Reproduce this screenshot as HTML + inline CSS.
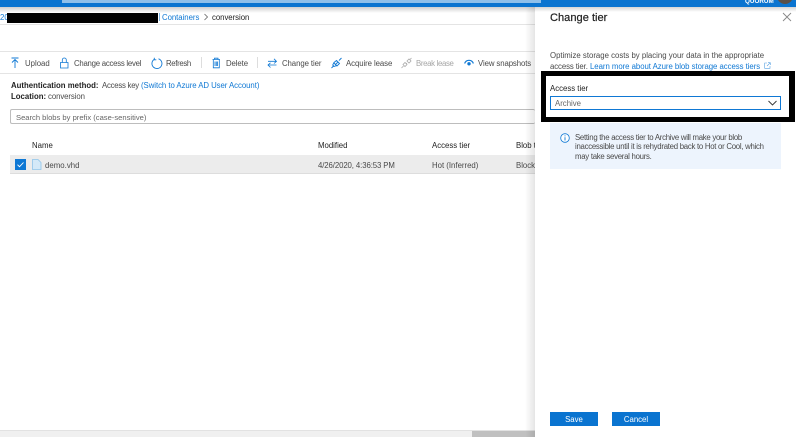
<!DOCTYPE html>
<html><head><meta charset="utf-8"><style>
html,body{margin:0;padding:0;background:#fff}
body{width:796px;height:437px;overflow:hidden;position:relative;font-family:"Liberation Sans",sans-serif;font-size:7.8px;color:#4a4a4a}
.a{position:absolute;white-space:nowrap;line-height:12px;margin-top:1px}
.r{position:absolute}
.l{color:#0f78d4}
svg{position:absolute;overflow:visible}
</style></head><body>
<div class="r" style="left:0;top:7px;width:796px;height:6px;background:linear-gradient(#cfcfcf,#fff)"></div>
<div class="r" style="left:0;top:0;width:796px;height:7px;background:#0a74d0"></div>
<div class="r" style="left:62px;top:0;width:479px;height:3px;background:#8fc0ea"></div>
<div class="a" style="left:745px;top:-5px;color:#fff;font-size:6.300px;font-weight:bold">QUORUM</div>
<div class="r" style="left:777px;top:-12px;width:16px;height:16px;border-radius:50%;background:#5a5048"></div>

<div class="a l" style="left:0;top:11px">20</div>
<div class="r" style="left:7px;top:13px;width:151px;height:10px;background:#000"></div>
<div class="r" style="left:159px;top:13px;width:1px;height:8px;background:#7fb5e5"></div>
<div class="a l" style="left:162px;top:11px;letter-spacing:-.04px">Containers</div>
<svg style="left:203px;top:13px" width="6" height="8"><path d="M1.500 1l3 3-3 3" fill="none" stroke="#666" stroke-width=".8"/></svg>
<div class="a" style="left:212px;top:11px;color:#222;letter-spacing:-.04px">conversion</div>
<div class="r" style="left:0;top:24px;width:535px;height:1px;background:#e4e4e4"></div>
<div class="r" style="left:0;top:51px;width:535px;height:1px;background:#e4e4e4"></div>
<div class="r" style="left:0;top:73px;width:535px;height:1px;background:#e4e4e4"></div>

<svg style="left:10px;top:57px" width="12" height="12"><path d="M5 11V2.500M2 5.500l3-3 3 3M1.500 1h7" fill="none" stroke="#0f78d4" stroke-width=".9"/></svg>
<div class="a" style="left:25px;top:57px">Upload</div>
<svg style="left:60px;top:57px" width="10" height="12"><path d="M.5 5.500h7.500v5.500h-7.500zM2.300 5.500V3a2 2 0 0 1 4 0v2.500" fill="none" stroke="#0f78d4" stroke-width=".8"/></svg>
<div class="a" style="left:74px;top:57px;letter-spacing:-.25px">Change access level</div>
<svg style="left:151px;top:57px" width="12" height="12"><path d="M3 2.500a5 5 0 1 0 4.500-.7M3.300 .8v2h2" fill="none" stroke="#0f78d4" stroke-width=".9"/></svg>
<div class="a" style="left:166px;top:57px;letter-spacing:-.35px">Refresh</div>
<div class="r" style="left:201px;top:57px;width:1px;height:11px;background:#ddd"></div>
<svg style="left:212px;top:57px" width="10" height="12"><path d="M.5 2.500h7.500M2.500 2.500V1.200h3.500v1.300M1.300 2.500v8.300h6V2.500M3 4.500v4.500M4.300 4.500v4.500M5.600 4.500v4.500" fill="none" stroke="#0f78d4" stroke-width=".8"/></svg>
<div class="a" style="left:226px;top:57px;letter-spacing:-.1px">Delete</div>
<div class="r" style="left:257px;top:57px;width:1px;height:11px;background:#ddd"></div>
<svg style="left:267px;top:57px" width="11" height="12"><path d="M1 4.300h8.500M7 1.800l2.500 2.500L7 6.500M9.500 8H1M3.500 5.800L1 8l2.500 2.500" fill="none" stroke="#0f78d4" stroke-width=".8"/></svg>
<div class="a" style="left:282px;top:57px;letter-spacing:-.08px">Change tier</div>
<svg style="left:331px;top:57px" width="11" height="12"><path d="M.5 11l2.500-2.500M8 3.500L10.500 1M3 5.500l2.500-2 3 3-2.500 2.500-3-3zM3 5.500L1.700 8l1.300 1.500 3-1M7 5l-3 3" fill="none" stroke="#0f78d4" stroke-width=".9"/></svg>
<div class="a" style="left:346px;top:57px;letter-spacing:-.08px">Acquire lease</div>
<svg style="left:401px;top:57px" width="11" height="12"><path d="M.5 11l2-2M8.500 3L10.500 1M2 7.500l2-2 2 2-2 2zM6 4l2-2 2 2-2 2zM5 7l1-1" fill="none" stroke="#aaa" stroke-width=".8"/></svg>
<div class="a" style="left:416px;top:57px;color:#a6a6a6;letter-spacing:-.33px">Break lease</div>
<svg style="left:464px;top:59px" width="10" height="8"><path d="M.7 4.500a4.500 4.500 0 0 1 8.600 0" fill="none" stroke="#0f78d4" stroke-width="1.200"/><circle cx="5" cy="4.800" r="1.700" fill="#0f78d4"/></svg>
<div class="a" style="left:478px;top:57px;letter-spacing:-.1px">View snapshots</div>

<div class="a" style="left:11px;top:79px;color:#222;font-weight:bold">Authentication method:</div>
<div class="a" style="left:102px;top:79px;letter-spacing:-.25px">Access key</div>
<div class="a l" style="left:141px;top:79px;letter-spacing:-.05px">(Switch to Azure AD User Account)</div>
<div class="a" style="left:11px;top:90px;color:#222;font-weight:bold">Location:</div>
<div class="a" style="left:48px;top:90px;letter-spacing:-.08px">conversion</div>
<div class="r" style="left:10px;top:109px;width:524px;height:13px;border:1px solid #bdbdbd;border-radius:2px;border-right:0"></div>
<div class="a" style="left:16px;top:111px;color:#666;font-size:7.600px">Search blobs by prefix (case-sensitive)</div>

<div class="a" style="left:32px;top:139px;color:#222">Name</div>
<div class="a" style="left:318px;top:139px;color:#222">Modified</div>
<div class="a" style="left:432px;top:139px;color:#222">Access tier</div>
<div class="a" style="left:516px;top:139px;color:#222">Blob t</div>
<div class="r" style="left:10px;top:155px;width:525px;height:18px;background:#ececec;border-bottom:1px solid #ddd"></div>
<div class="r" style="left:15px;top:159px;width:11px;height:11px;background:#0f78d4"></div>
<svg style="left:15px;top:159px" width="11" height="11"><path d="M2.500 5.700l2 2 4-4.200" fill="none" stroke="#fff" stroke-width=".9"/></svg>
<svg style="left:32px;top:159px" width="10" height="11"><path d="M.5.500h5.500l3 3v7h-8.500z" fill="#d4e9f8" stroke="#8fc5ea" stroke-width=".8"/></svg>
<div class="a" style="left:45px;top:159px;letter-spacing:.03px">demo.vhd</div>
<div class="a" style="left:318px;top:159px;letter-spacing:-.1px">4/26/2020, 4:36:53 PM</div>
<div class="a" style="left:432px;top:159px">Hot (Inferred)</div>
<div class="a" style="left:516px;top:159px">Block</div>

<div class="r" style="left:0;top:430px;width:535px;height:7px;background:#f0f0f0;border-top:1px solid #e2e2e2;box-sizing:border-box"></div>
<div class="r" style="left:472px;top:431px;width:63px;height:6px;background:#c0c0c0"></div>

<div class="r" style="left:525px;top:7px;width:10px;height:430px;background:linear-gradient(90deg,rgba(0,0,0,0),rgba(0,0,0,.1))"></div>
<div class="r" style="left:535px;top:7px;width:261px;height:430px;background:#fff"></div>
<div class="r" style="left:535px;top:7px;width:261px;height:5px;background:linear-gradient(#d5d5d5,#fff)"></div>

<div class="a" style="left:550px;top:10px;font-size:11.100px;line-height:15px;color:#222;-webkit-text-stroke:.2px #222">Change tier</div>
<svg style="left:782px;top:12px" width="10" height="10"><path d="M1 1l8 8M9 1L1 9" stroke="#888" stroke-width=".9"/></svg>
<div class="a" style="left:550px;top:49px">Optimize storage costs by placing your data in the appropriate</div>
<div class="a" style="left:550px;top:60px;letter-spacing:-.1px">access tier.</div>
<div class="a l" style="left:590px;top:60px;letter-spacing:-.04px">Learn more about Azure blob storage access tiers</div>
<svg style="left:764px;top:62px;opacity:.7" width="7" height="7"><path d="M3 1H.7v5.300H6V4M3 4l3.300-3.300M4 .7h2.300V3" fill="none" stroke="#0f78d4" stroke-width=".6"/></svg>

<div class="r" style="left:541px;top:71px;width:243px;height:41px;border:5px solid #000;border-right-width:6px;background:#fff"></div>
<div class="a" style="left:550px;top:82px;color:#222">Access tier</div>
<div class="r" style="left:550px;top:96px;width:229px;height:12px;border:1px solid #0f78d4"></div>
<div class="a" style="left:555px;top:97px;color:#666">Archive</div>
<svg style="left:768px;top:100px" width="9" height="6"><path d="M.5 1l4 4 4-4" fill="none" stroke="#333" stroke-width=".9"/></svg>

<div class="r" style="left:550px;top:122.500px;width:231px;height:46px;background:#edf4fd"></div>
<svg style="left:560px;top:133px" width="10" height="10"><circle cx="5" cy="5" r="4.300" fill="#fff" stroke="#0f78d4" stroke-width=".8"/><path d="M5 4.200v3.300M5 2.400v1" stroke="#0f78d4" stroke-width=".9"/></svg>
<div class="a" style="left:575px;top:131px;letter-spacing:-.27px">Setting the access tier to Archive will make your blob</div>
<div class="a" style="left:575px;top:140px;letter-spacing:-.27px">inaccessible until it is rehydrated back to Hot or Cool, which</div>
<div class="a" style="left:575px;top:150px;letter-spacing:-.27px">may take several hours.</div>

<div class="r" style="left:550px;top:412px;width:48px;height:14px;background:#0a74d0"></div>
<div class="a" style="left:550px;top:413px;width:48px;text-align:center;color:#fff">Save</div>
<div class="r" style="left:612px;top:412px;width:48px;height:14px;background:#0a74d0"></div>
<div class="a" style="left:612px;top:413px;width:48px;text-align:center;color:#fff">Cancel</div>
</body></html>
